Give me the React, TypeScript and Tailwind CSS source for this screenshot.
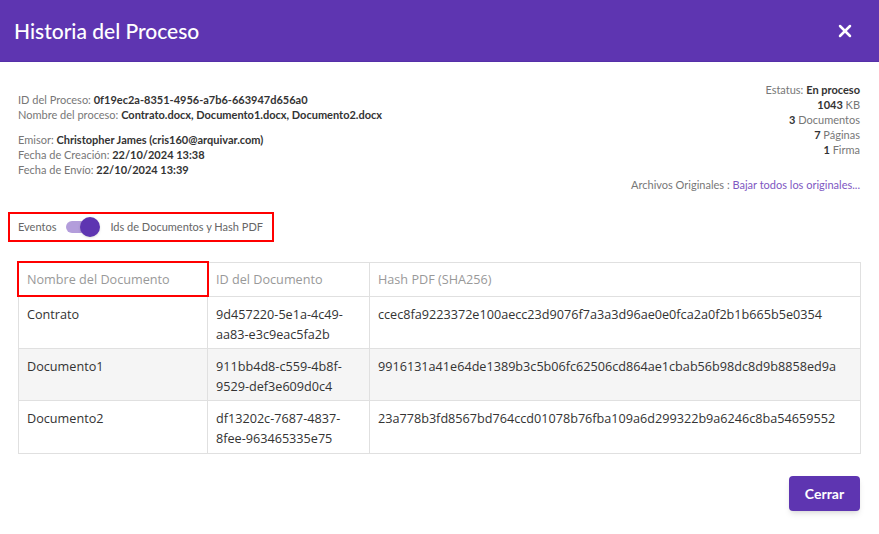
import { X } from 'lucide-react';

const docs = [
  {
    name: 'Contrato',
    id: ['9d457220-5e1a-4c49-', 'aa83-e3c9eac5fa2b'],
    hash: 'ccec8fa9223372e100aecc23d9076f7a3a3d96ae0e0fca2a0f2b1b665b5e0354',
  },
  {
    name: 'Documento1',
    id: ['911bb4d8-c559-4b8f-', '9529-def3e609d0c4'],
    hash: '9916131a41e64de1389b3c5b06fc62506cd864ae1cbab56b98dc8d9b8858ed9a',
  },
  {
    name: 'Documento2',
    id: ['df13202c-7687-4837-', '8fee-963465335e75'],
    hash: '23a778b3fd8567bd764ccd01078b76fba109a6d299322b9a6246c8ba54659552',
  },
];

export default function App() {
  return (
    <div className="w-[879px] h-[534px] bg-white flex flex-col font-['Lato','Noto_Sans',sans-serif]">
      {/* Header */}
      <div className="h-[62px] bg-[#5e35b1] border-b border-[#5530a8] flex items-center justify-between pl-[14px] pr-[24px] shrink-0">
        <h1 className="text-white text-[21px] font-medium">Historia del Proceso</h1>
        <X className="w-[20px] h-[20px] text-white" strokeWidth={3} />
      </div>

      <div className="flex justify-between pl-[18px] pr-[19px] pt-[20px]">
        <div className="text-[11px] leading-[15px] text-[#777] pt-[10px]">
          <p>ID del Proceso: <span className="font-bold text-[#333]">0f19ec2a-8351-4956-a7b6-663947d656a0</span></p>
          <p>Nombre del proceso: <span className="font-bold text-[#333]">Contrato.docx, Documento1.docx, Documento2.docx</span></p>
          <div className="mt-[10px]">
            <p>Emisor: <span className="font-bold text-[#333]">Christopher James (cris160@arquivar.com)</span></p>
            <p>Fecha de Creación: <span className="font-bold text-[#333]">22/10/2024 13:38</span></p>
            <p>Fecha de Envío: <span className="font-bold text-[#333]">22/10/2024 13:39</span></p>
          </div>
        </div>
        <div className="text-[11px] leading-[15px] text-[#777] text-right">
          <p>Estatus: <span className="font-bold text-[#333]">En proceso</span></p>
          <p><span className="font-bold text-[#333]">1043</span> KB</p>
          <p><span className="font-bold text-[#333]">3</span> Documentos</p>
          <p><span className="font-bold text-[#333]">7</span> Páginas</p>
          <p><span className="font-bold text-[#333]">1</span> Firma</p>
          <p className="mt-[20px]">
            Archivos Originales : <span className="text-[#7e57c2]">Bajar todos los originales...</span>
          </p>
        </div>
      </div>

      {/* Toggle */}
      <div className="pl-[8px] mt-[20px]">
        <div className="inline-flex items-center gap-[10px] h-[30px] border-2 border-[#ff0000] pl-[8px] pr-[9px] text-[11px] text-[#666]">
          <span>Eventos</span>
          <div className="relative w-[34px] h-[20px] flex items-center">
            <div className="w-[30px] h-[12px] rounded-full bg-[#b39ddb]" />
            <div className="absolute right-0 w-[20px] h-[20px] rounded-full bg-[#5e35b1] shadow" />
          </div>
          <span>Ids de Documentos y Hash PDF</span>
        </div>
      </div>

      {/* Table */}
      <div className="mx-[18px] mt-[20px] border border-[#e0e0e0] font-['Open_Sans','Noto_Sans',sans-serif] text-[12.65px] text-[#333]">
        <div className="grid grid-cols-[188px_162px_1fr] h-[34px] border-b border-[#e0e0e0] text-[#999]">
          <div className="relative flex items-center px-[8px]">
            <div className="absolute -left-[2px] -top-[2px] w-[192px] h-[36px] border-2 border-[#ff0000]" />
            Nombre del Documento
          </div>
          <div className="flex items-center px-[8px] border-l border-[#e0e0e0]">ID del Documento</div>
          <div className="flex items-center px-[8px] border-l border-[#e0e0e0]">Hash PDF (SHA256)</div>
        </div>
        {docs.map((d, i) => (
          <div
            key={d.name}
            className={`grid grid-cols-[188px_162px_1fr] h-[52px] leading-[20px] ${i === 1 ? 'bg-[#f5f5f5]' : ''} ${i < 2 ? 'border-b border-[#e0e0e0]' : ''}`}
          >
            <div className="px-[8px] pt-[7px]">{d.name}</div>
            <div className="px-[8px] pt-[7px] border-l border-[#e0e0e0]">
              {d.id[0]}
              <br />
              {d.id[1]}
            </div>
            <div className="px-[8px] pt-[7px] border-l border-[#e0e0e0] whitespace-nowrap">{d.hash}</div>
          </div>
        ))}
      </div>

      <div className="flex justify-end pr-[19px] mt-[22px]">
        <button className="w-[71px] h-[35px] rounded-[4px] bg-[#5e35b1] text-white text-[14px] font-bold shadow-md">
          Cerrar
        </button>
      </div>
    </div>
  );
}
